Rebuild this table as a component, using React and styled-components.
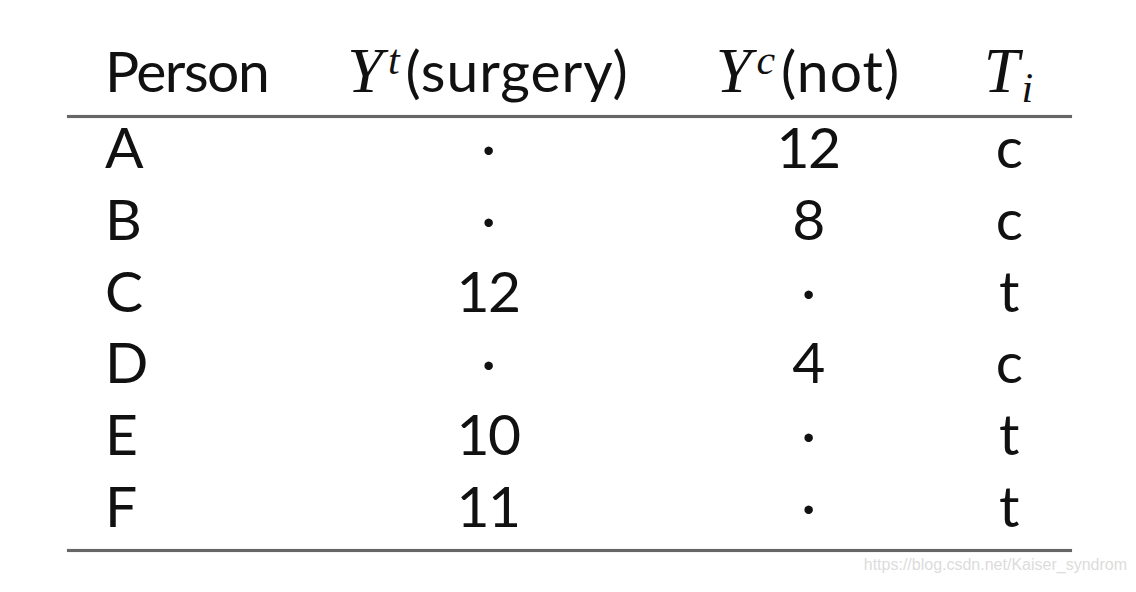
import styled, { createGlobalStyle } from "styled-components";

const GlobalStyle = createGlobalStyle`
  html, body { margin: 0; padding: 0; background: #fff; }
`;

const rows = [
    { person: "A", yt: "·", yc: "12", t: "c" },
    { person: "B", yt: "·", yc: "8", t: "c" },
    { person: "C", yt: "12", yc: "·", t: "t" },
    { person: "D", yt: "·", yc: "4", t: "c" },
    { person: "E", yt: "10", yc: "·", t: "t" },
    { person: "F", yt: "11", yc: "·", t: "t" },
];

const App = () => {
    return (
        <Page>
            <GlobalStyle />
            <Table>
                <Row $height={73}>
                    <Cell $left>Person</Cell>
                    <HeadCell>
                        <MathVar>Y</MathVar><Sup>t</Sup>(surgery)
                    </HeadCell>
                    <HeadCell>
                        <MathVar>Y</MathVar><Sup>c</Sup>(not)
                    </HeadCell>
                    <HeadCell>
                        <MathVar>T</MathVar><Sub>i</Sub>
                    </HeadCell>
                </Row>
                <Rule />
                {rows.map((r) => (
                    <Row key={r.person} $height={71.8}>
                        <Cell $left>{r.person}</Cell>
                        <Cell>{r.yt}</Cell>
                        <Cell>{r.yc}</Cell>
                        <Cell>{r.t}</Cell>
                    </Row>
                ))}
                <Rule />
            </Table>
            <Watermark>https://blog.csdn.net/Kaiser_syndrom</Watermark>
        </Page>
    );
};

const Page = styled.div`
    width: 1136px;
    height: 592px;
    box-sizing: border-box;
    padding-top: 42px;
    display: flex;
    flex-direction: column;
    background: #fff;
    overflow: hidden;
`;

const Table = styled.div`
    width: 1005px;
    margin-left: 67px;
    font-family: Lato, "Liberation Sans", sans-serif;
    font-size: 57px;
    color: #111;
`;

const Row = styled.div`
    display: grid;
    grid-template-columns: 238px 366px 274px 127px;
    height: ${(p) => p.$height}px;
    line-height: 57px;
`;

const Cell = styled.div`
    text-align: ${(p) => (p.$left ? "left" : "center")};
    padding-left: ${(p) => (p.$left ? "38px" : "0")};
    letter-spacing: -1.5px;
    white-space: nowrap;
`;

const HeadCell = styled(Cell)`
    letter-spacing: 1px;
`;

const MathVar = styled.span`
    font-family: "Liberation Serif", "DejaVu Serif", serif;
    font-style: italic;
    font-size: 64px;
    letter-spacing: 0;
    margin-right: 2px;
`;

const Sup = styled.sup`
    font-family: "Liberation Serif", "DejaVu Serif", serif;
    font-style: italic;
    font-size: 42px;
    letter-spacing: 0;
    vertical-align: 18px;
    line-height: 0;
    margin-left: 3px;
    margin-right: 6px;
`;

const Sub = styled.sub`
    font-family: "Liberation Serif", "DejaVu Serif", serif;
    font-style: italic;
    font-size: 42px;
    letter-spacing: 0;
    vertical-align: -10px;
    line-height: 0;
`;

const Rule = styled.div`
    height: 3px;
    background: #666;
    box-shadow: 0 0 1px #999;
`;

const Watermark = styled.div`
    align-self: flex-end;
    margin-right: 9px;
    margin-top: 4px;
    font-family: "Liberation Sans", Arial, sans-serif;
    font-size: 16px;
    color: #dcdcdc;
`;

export default App;
